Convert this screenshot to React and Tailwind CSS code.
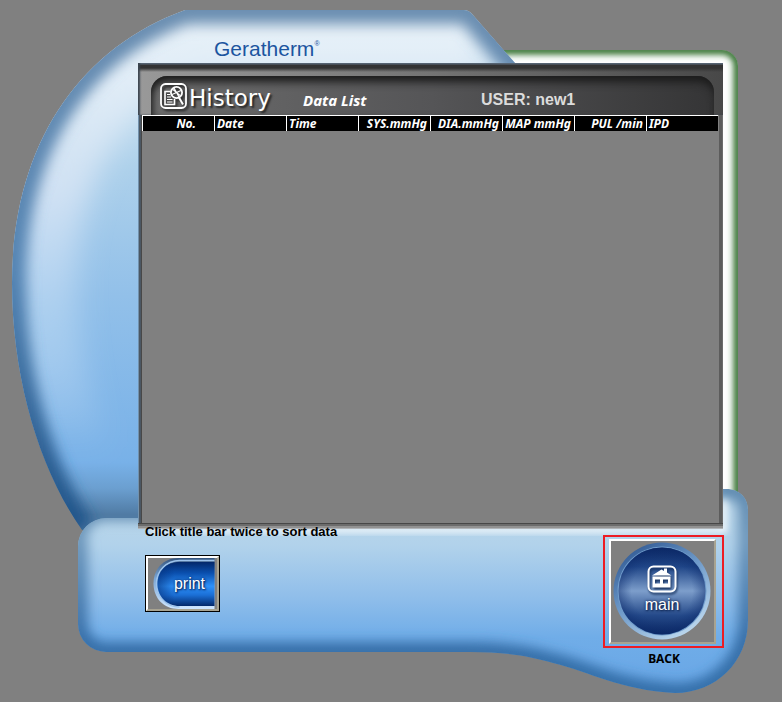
import React from "react";

const COLUMNS = [
  { label: "No.", style: "text-right pr-[18px]" },
  { label: "Date", style: "text-left pl-0.5" },
  { label: "Time", style: "text-left pl-0.5" },
  { label: "SYS.mmHg", style: "text-right pr-[3px]" },
  { label: "DIA.mmHg", style: "text-right pr-[3px]" },
  { label: "MAP mmHg", style: "text-right pr-[3px]" },
  { label: "PUL /min", style: "text-right pr-[3px]" },
  { label: "IPD", style: "text-left pl-0.5" },
];

const BODY =
  "M185 10 H464 Q469 10 473 15 L516 64 V80 H143 V530 H82 C40 470 12 380 12 283 C12 150 75 50 185 10 Z";
const BASE =
  "M106 518 H723 V489 H726 C740 489 748 498 748 510 V620 C748 662 716 693 675 693 C620 690 590 672 553 663 C530 656 505 652 470 652 H106 A28 28 0 0 1 78 624 V546 A28 28 0 0 1 106 518 Z";
const RAIL = "M480 50 H722 A16 16 0 0 1 738 66 V500 H480 Z";

function DeviceArt() {
  return (
    <svg
      className="absolute inset-0 h-full w-full"
      viewBox="0 0 782 702"
      preserveAspectRatio="none"
      aria-hidden="true"
    >
      <defs>
        <clipPath id="bodyClip"><path d={BODY} /></clipPath>
        <clipPath id="baseClip"><path d={BASE} /></clipPath>
        <clipPath id="railClip"><path d={RAIL} /></clipPath>
        <linearGradient id="bodyFill" gradientUnits="userSpaceOnUse" x1="0" y1="10" x2="0" y2="530">
          <stop offset="0" stopColor="#dae9f4" />
          <stop offset="0.14" stopColor="#cbe1f1" />
          <stop offset="0.3" stopColor="#aed1eb" />
          <stop offset="0.55" stopColor="#92c0e9" />
          <stop offset="0.87" stopColor="#78b1e8" />
          <stop offset="0.92" stopColor="#6b9fd0" />
          <stop offset="0.97" stopColor="#507ba4" />
        </linearGradient>
        <linearGradient id="bodyEdge" gradientUnits="userSpaceOnUse" x1="0" y1="10" x2="0" y2="530">
          <stop offset="0" stopColor="#6b8eb1" />
          <stop offset="0.5" stopColor="#5484b3" />
          <stop offset="1" stopColor="#205489" />
        </linearGradient>
        <linearGradient id="bodyGlow" gradientUnits="userSpaceOnUse" x1="0" y1="10" x2="0" y2="530">
          <stop offset="0" stopColor="#ffffff" stopOpacity="0.4" />
          <stop offset="0.35" stopColor="#e6ecf8" stopOpacity="0.65" />
          <stop offset="0.6" stopColor="#c8e0f6" stopOpacity="0.45" />
          <stop offset="0.85" stopColor="#ffffff" stopOpacity="0" />
        </linearGradient>
        <linearGradient id="baseFill" gradientUnits="userSpaceOnUse" x1="0" y1="518" x2="0" y2="693">
          <stop offset="0" stopColor="#b9d6ea" />
          <stop offset="0.16" stopColor="#b1d2eb" />
          <stop offset="0.45" stopColor="#90beea" />
          <stop offset="0.68" stopColor="#70ade8" />
          <stop offset="1" stopColor="#68a6e6" />
        </linearGradient>
        <linearGradient id="baseEdge" gradientUnits="userSpaceOnUse" x1="0" y1="489" x2="0" y2="693">
          <stop offset="0" stopColor="#5f8ab0" />
          <stop offset="0.25" stopColor="#7099bd" />
          <stop offset="0.75" stopColor="#376fa9" />
          <stop offset="1" stopColor="#3570aa" />
        </linearGradient>
        <filter id="soft7" x="-20%" y="-20%" width="140%" height="140%"><feGaussianBlur stdDeviation="7" /></filter>
        <filter id="soft5" x="-20%" y="-20%" width="140%" height="140%"><feGaussianBlur stdDeviation="6" /></filter>
        <filter id="soft14" x="-20%" y="-20%" width="140%" height="140%"><feGaussianBlur stdDeviation="14" /></filter>
        <filter id="soft3" x="-20%" y="-20%" width="140%" height="140%"><feGaussianBlur stdDeviation="3" /></filter>
      </defs>
      <g clipPath="url(#railClip)">
        <path d={RAIL} fill="#fff" />
        <path d="M470 50 H722 A16 16 0 0 1 738 66 V510" fill="none" stroke="#33702f" strokeWidth="9" filter="url(#soft3)" />
      </g>
      <g clipPath="url(#bodyClip)">
        <path d={BODY} fill="url(#bodyFill)" />
        <path d="M480 10 H185 C75 50 12 150 12 283 C12 380 40 470 82 530" fill="none" stroke="url(#bodyGlow)" strokeWidth="130" filter="url(#soft14)" />
        <path d="M82 530 C40 470 12 380 12 283 C12 150 75 50 185 10 H464 Q469 10 473 15 L526 76" fill="none" stroke="url(#bodyEdge)" strokeWidth="28" filter="url(#soft7)" />
      </g>
      <g clipPath="url(#baseClip)">
        <path d={BASE} fill="url(#baseFill)" />
        <path
          d="M150 511 H106 A28 28 0 0 0 78 546 V624 A28 28 0 0 0 106 652 H470 C505 652 530 656 553 663 C590 672 620 690 675 693 C716 693 748 662 748 620 V510 C748 498 740 489 726 489 H715"
          fill="none"
          stroke="url(#baseEdge)"
          strokeWidth="20"
          filter="url(#soft5)"
        />
        <path d="M150 530 H724 V500" fill="none" stroke="#fff" strokeOpacity="0.9" strokeWidth="5" filter="url(#soft3)" />
      </g>
    </svg>
  );
}

function HistoryIcon() {
  return (
    <svg className="h-[26px] w-[27px] shrink-0 drop-shadow-[2px_2px_1px_#222]" viewBox="0 0 27 26" fill="none" stroke="#fff" aria-hidden="true">
      <rect x="1" y="1" width="25" height="24" rx="4.500" strokeWidth="1.8" />
      <path d="M10.500 8.500 H5 V21.500 H14.500 V16" strokeWidth="1.6" />
      <path d="M7 11.500 H10 M7 14 H11 M7 16.500 H12.500 M7 19 H12.500" strokeWidth="1.2" />
      <circle cx="16.500" cy="9.500" r="5.600" strokeWidth="1.800" />
      <path d="M12 11.500 L21 7.500 M14 5 L19 14 M13 6.500 L20 12.500" strokeWidth="1.200" />
      <path d="M19 14.500 L23 21.500" strokeWidth="2" />
    </svg>
  );
}

function PrintArt() {
  return (
    <svg className="absolute inset-0 h-full w-full" viewBox="0 0 68 51" aria-hidden="true">
      <defs>
        <linearGradient id="printRim" x1="0" y1="0" x2="0" y2="1">
          <stop offset="0" stopColor="#34547e" />
          <stop offset="0.4" stopColor="#7ba6d4" />
          <stop offset="1" stopColor="#cfe6ff" />
        </linearGradient>
        <linearGradient id="printFill" x1="0" y1="0" x2="0" y2="1">
          <stop offset="0" stopColor="#03286a" />
          <stop offset="0.25" stopColor="#0a4fae" />
          <stop offset="0.55" stopColor="#2e92fa" />
          <stop offset="0.75" stopColor="#1b6fd6" />
          <stop offset="1" stopColor="#03286a" />
        </linearGradient>
        <linearGradient id="printSide" x1="0" y1="0" x2="1" y2="0">
          <stop offset="0" stopColor="#042c74" stopOpacity="0.6" />
          <stop offset="0.3" stopColor="#042c74" stopOpacity="0" />
        </linearGradient>
      </defs>
      <path d="M66 0 H30 C15 0 5 11 5 25.500 C5 40 15 51 30 51 H66 Z" fill="url(#printRim)" />
      <path d="M66 2.500 H31 C18 2.500 8 13 8 25.500 C8 38 18 49 31 49" fill="none" stroke="#9cc3ec" strokeWidth="1.500" />
      <path d="M66 4 H31 C18 4 9 13 9 26 C9 38 18 48 31 48 H66 Z" fill="url(#printFill)" />
      <path d="M66 4 H31 C18 4 9 13 9 26 C9 38 18 48 31 48 H66 Z" fill="url(#printSide)" />
    </svg>
  );
}

function MainArt() {
  return (
    <svg className="absolute inset-0 h-full w-full" viewBox="0 0 103 101" aria-hidden="true">
      <defs>
        <linearGradient id="mainRim" x1="0.15" y1="0" x2="0.8" y2="1">
          <stop offset="0" stopColor="#2c5590" />
          <stop offset="0.45" stopColor="#6c98c8" />
          <stop offset="1" stopColor="#c4def2" />
        </linearGradient>
        <linearGradient id="mainFill" x1="0" y1="0" x2="0" y2="1">
          <stop offset="0" stopColor="#0a2560" />
          <stop offset="0.22" stopColor="#1f4587" />
          <stop offset="0.5" stopColor="#7d9ecb" />
          <stop offset="0.78" stopColor="#244989" />
          <stop offset="1" stopColor="#0a2560" />
        </linearGradient>
        <radialGradient id="mainShade">
          <stop offset="0.7" stopColor="#12357a" stopOpacity="0" />
          <stop offset="1" stopColor="#0c2b6c" stopOpacity="0.5" />
        </radialGradient>
      </defs>
      <circle cx="51" cy="50" r="48.500" fill="url(#mainRim)" />
      <circle cx="51" cy="50" r="44.500" fill="#6f9bcb" />
      <circle cx="51" cy="50" r="43.500" fill="url(#mainFill)" />
      <circle cx="51" cy="50" r="43.500" fill="url(#mainShade)" />
    </svg>
  );
}

function HomeIcon() {
  return (
    <svg className="h-7 w-[30px] drop-shadow-[1px_2px_1px_#16305c]" viewBox="0 0 30 28" aria-hidden="true">
      <rect x="1.500" y="1.500" width="27" height="25" rx="5" fill="none" stroke="#fff" strokeWidth="2" />
      <path d="M5 10.500 L14.500 4.500 L17 6 V3.500 H20 V7.500 L24.500 10.500 Z" fill="#fff" />
      <path fillRule="evenodd" d="M5.500 11.500 H23.500 V22.500 H5.500 Z M8 14.500 V18.500 H13 V14.500 Z M16 14.500 V18.500 H21 V14.500 Z" fill="#fff" />
    </svg>
  );
}

export default function App() {
  return (
    <div className="relative min-h-screen bg-[#808080] font-['Liberation_Sans',Arial,sans-serif]">
      <DeviceArt />
      <div className="relative flex min-h-screen flex-col pr-[59px] pl-[138px]">
        <header className="h-[63px] shrink-0 pt-9 pl-[76px]">
          <p className="flex items-start text-[21px] leading-[26px] text-[#1c559f]">
            Geratherm<span className="pt-1 text-[7px] leading-[8px]">®</span>
          </p>
        </header>

        <section className="flex flex-1 flex-col bg-[#808080] pr-1 pl-1 shadow-[inset_1px_0_#7291ac,inset_3px_0_#4b5763,inset_4px_0_#484848,inset_-1px_0_#6d6d6d,inset_-4px_0_#5c5c5c,0_1px_0_#484848,0_3px_0_#6c6c6c,0_5px_0_#929292,0_6px_0_#b0b4b8]">
          <div className="-mx-1 bg-linear-to-r from-[#999] via-[#747474] to-[#484848]">
            <div className="bg-[linear-gradient(to_bottom,#5f6f7e_0px,#5f6f7e_1px,#333_2px,#333_5px,transparent_9px)] pt-[13px] pr-[9px] pl-[13px] shadow-[inset_2px_0_2px_#3b4550]">
              <div className="flex h-[39px] items-center rounded-t-2xl bg-linear-to-r from-[#6c6c6c] via-[#555557] to-[#353536] pl-[9px] shadow-[inset_0_8px_8px_-2px_#1c1c1c,inset_5px_0_6px_-3px_#333]">
                <HistoryIcon />
                <h1 className="w-[116px] pt-1 pl-0.5 font-['DejaVu_Sans',sans-serif] text-[23px] leading-[26px] text-white [text-shadow:2px_2px_2px_#222]">History</h1>
                <h2 className="w-[178px] pt-2 font-['Noto_Sans',sans-serif] text-[15px] leading-5 font-bold text-white italic">Data List</h2>
                <p className="pt-2 text-[16px] leading-5 font-bold text-[#dcdcdc]">USER: new1</p>
              </div>
            </div>
          </div>
          <div className="pr-px">
            <table className="w-full table-fixed border-collapse bg-black">
              <thead>
                <tr>
                  {COLUMNS.map((c) => (
                    <th key={c.label} scope="col" className="h-4 p-0 align-top">
                      <button
                        type="button"
                        className={`block h-4 w-full cursor-pointer border-t border-l border-white font-['Noto_Sans',sans-serif] text-[12px] leading-[14px] font-bold whitespace-nowrap text-white italic ${c.style}`}
                      >
                        {c.label}
                      </button>
                    </th>
                  ))}
                </tr>
              </thead>
              <tbody />
            </table>
          </div>
        </section>

        <footer className="flex h-[179px] shrink-0 items-start justify-between pl-[7px]">
          <div>
            <p className="pt-px text-[13px] leading-4 font-bold text-black">Click title bar twice to sort data</p>
            <button type="button" className="mt-[15px] block border border-black">
              <span className="relative flex h-[55px] w-[73px] items-center justify-center border-2 border-t-white border-r-[#a8a391] border-b-[#a8a391] border-l-white bg-[#808080] pl-[14px] text-[16px] text-white">
                <PrintArt />
                <span className="relative [text-shadow:1px_1px_2px_#01205a,0_0_3px_#01205a]">print</span>
              </span>
            </button>
          </div>
          <div className="flex w-[120px] flex-col items-center pt-3">
            <div className="flex h-[113px] w-[121px] items-start justify-start border-2 border-[#ed1c24] pt-0.5 pl-1">
              <button
                type="button"
                aria-describedby="back-caption"
                className="relative flex h-[105px] w-[107px] flex-col items-center border-2 border-t-white border-r-[#a8a391] border-b-[#a8a391] border-l-white bg-[#808080] pt-6 text-[16px] leading-5 text-white"
              >
                <MainArt />
                <span className="relative"><HomeIcon /></span>
                <span className="relative pt-0.5 [text-shadow:1px_1px_2px_#0a1f4a,0_0_3px_#0a1f4a]">main</span>
              </button>
            </div>
            <p id="back-caption" className="pt-[3px] pl-0.5 font-['Noto_Sans',sans-serif] text-[12px] leading-4 font-bold text-black">BACK</p>
          </div>
        </footer>
      </div>
    </div>
  );
}
